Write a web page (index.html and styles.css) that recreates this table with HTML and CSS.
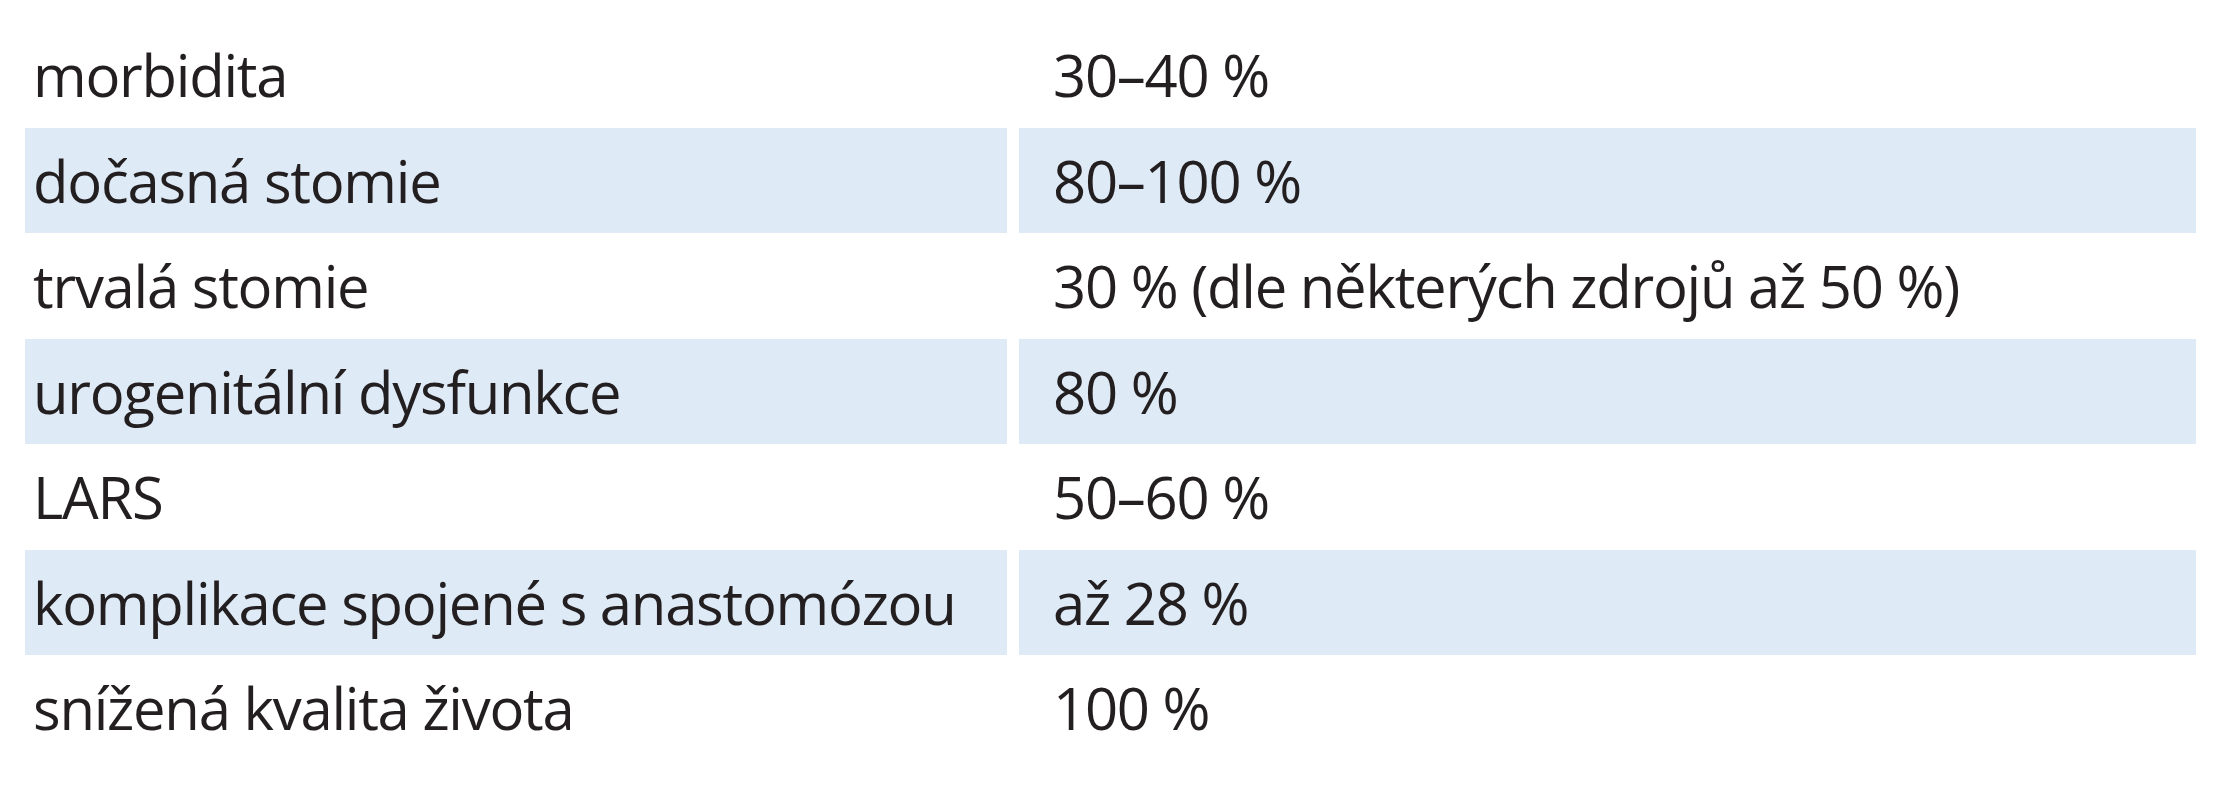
FILE: index.html
```html
<!DOCTYPE html>
<html lang="cs">
<head>
<meta charset="utf-8">
<link rel="stylesheet" href="styles.css">
</head>
<body>
<div class="table">
  <div class="row"><div class="cell label">morbidita</div><div class="cell value">30–40 %</div></div>
  <div class="row shaded"><div class="cell label">dočasná stomie</div><div class="cell value">80–100 %</div></div>
  <div class="row"><div class="cell label">trvalá stomie</div><div class="cell value">30 % (dle některých zdrojů až 50 %)</div></div>
  <div class="row shaded"><div class="cell label">urogenitální dysfunkce</div><div class="cell value">80 %</div></div>
  <div class="row"><div class="cell label">LARS</div><div class="cell value">50–60 %</div></div>
  <div class="row shaded"><div class="cell label">komplikace spojené s anastomózou</div><div class="cell value">až 28 %</div></div>
  <div class="row"><div class="cell label">snížená kvalita života</div><div class="cell value">100 %</div></div>
</div>
</body>
</html>
```
FILE: styles.css
```css
html, body {
  margin: 0;
  padding: 0;
  background: #ffffff;
}
body {
  font-family: "Open Sans", "Noto Sans", sans-serif;
  color: #231f20;
}
.table {
  padding: 22px 0 0 25px;
  display: flex;
  flex-direction: column;
}
.row {
  display: grid;
  grid-template-columns: 982px 1177px;
  column-gap: 12px;
  height: 105.5px;
}
.cell {
  font-size: 58px;
  line-height: 105.5px;
  letter-spacing: -1.25px;
  white-space: nowrap;
}
.label {
  padding-left: 8px;
}
.value {
  padding-left: 34px;
}
.shaded .cell {
  background: #dfeaf7;
}
```
